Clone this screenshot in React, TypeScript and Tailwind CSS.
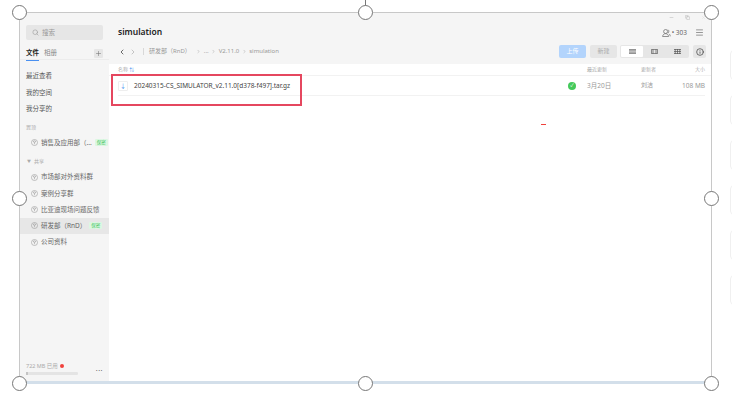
import { Search, Plus, ChevronLeft, ChevronRight, Info, Menu, Minus, Copy, X } from 'lucide-react'

const CJK = "font-['Noto_Sans','Noto_Sans_CJK_SC',sans-serif]"

function Handle({ className }: { className: string }) {
  return <div className={`absolute h-[15px] w-[15px] rounded-full border border-[#777] bg-white ${className}`} />
}

function SpaceIcon() {
  return (
    <svg width="7" height="7" viewBox="0 0 12 12" fill="none" stroke="#9a9a9a" strokeWidth="1" className="shrink-0">
      <circle cx="6" cy="6" r="5.2" />
      <path d="M3.5 4.4 6 3l2.5 1.4L6 5.8zM6 5.8V9" />
    </svg>
  )
}

function Badge() {
  return <span className="shrink-0 whitespace-nowrap rounded-[1px] bg-[#dcf7e2] px-[2px] text-[4.5px] leading-[7px] text-[#3cc45c]">保密</span>
}

function NavItem({ label, badge, active }: { label: string; badge?: boolean; active?: boolean }) {
  return (
    <div className={`flex h-[16.25px] items-center gap-[3px] pl-[11px] text-[6.5px] text-[#666] ${active ? 'bg-[#e7e7e7]' : ''}`}>
      <SpaceIcon />
      <span className="whitespace-nowrap">{label}</span>
      {badge && <Badge />}
    </div>
  )
}

function ViewIcon({ kind }: { kind: 'list' | 'columns' | 'grid' }) {
  return (
    <svg width="7" height="5" viewBox="0 0 7 5" fill="none" stroke="#555" strokeWidth="0.7">
      {kind === 'list' && <path d="M0 .4h7M0 1.8h7M0 3.2h7M0 4.6h7" />}
      {kind === 'columns' && <path d="M.4.4h6.2v4.2H.4zM2 .4v4.2M5 .4v4.2" />}
      {kind === 'grid' && <path d="M0 .5h7M0 2.5h7M0 4.5h7M1.2 0v5M3.5 0v5M5.8 0v5" />}
    </svg>
  )
}

function UserCount() {
  return (
    <svg width="9" height="8" viewBox="0 0 9 8" fill="none" stroke="#666" strokeWidth="0.7">
      <circle cx="3.6" cy="2.5" r="2" />
      <path d="M.6 7.5c.2-1.8 1.3-2.8 3-2.8s2.8 1 3 2.8zM6 .7c1 .4 1.2 2.6 0 3.4M7 4.9c.8.4 1.2 1.2 1.3 2.4" />
    </svg>
  )
}

const handles = [
  'left-[12px] top-[5px]',
  'left-[358px] top-[5px]',
  'left-[704px] top-[5px]',
  'left-[12px] top-[191px]',
  'left-[704px] top-[191px]',
  'left-[12px] top-[376px]',
  'left-[358px] top-[376px]',
  'left-[704px] top-[376px]',
]

export default function App() {
  return (
    <div className={`relative h-[412px] w-[732px] overflow-hidden bg-white ${CJK}`}>
      {/* selected window on the canvas */}
      <div className="absolute left-[19px] top-[12px] flex h-[370px] w-[693px] border-x border-t border-[#c8c8c8]">
        <aside className="flex w-[89px] shrink-0 flex-col overflow-hidden bg-[#f5f5f5]">
          <div className="mx-[6px] mt-[12px] flex h-[15px] items-center gap-[3px] rounded-[2px] bg-[#e6e6e6] pl-[6px] text-[6.5px] text-[#999]">
            <Search size={7} />
            <span>搜索</span>
          </div>
          <div className="mt-[7px] flex h-[13px] items-center border-b border-[#ececec] pl-[6px] pr-[6px] text-[6.5px] text-[#888]">
            <span className="relative font-semibold text-[#222]">
              文件
              <span className="absolute -bottom-[3px] left-0 h-[1px] w-[13px] bg-[#4a90f0]" />
            </span>
            <span className="ml-[5px]">相册</span>
            <span className="ml-auto flex h-[9px] w-[9px] items-center justify-center rounded-[1px] bg-[#e6e6e6]">
              <Plus size={7} color="#777" />
            </span>
          </div>
          <div className="mt-[8px] flex flex-col text-[6.5px] text-[#555]">
            <div className="flex h-[16.25px] items-center pl-[6px]">最近查看</div>
            <div className="flex h-[16.25px] items-center pl-[6px]">我的空间</div>
            <div className="flex h-[16.25px] items-center pl-[6px]">我分享的</div>
          </div>
          <div className="mt-[5px] flex h-[12px] items-center pl-[6px] text-[5px] text-[#aaa]">置顶</div>
          <div className="mt-[1px] flex h-[16.25px] items-center gap-[3px] pl-[11px] text-[6.5px] text-[#666]">
            <SpaceIcon />
            <span className="whitespace-nowrap">销售及应用部（...</span>
            <Badge />
          </div>
          <div className="mt-[5px] flex h-[12px] items-center gap-[3px] pl-[7px] text-[5px] text-[#aaa]">
            <span className="text-[4px]">▼</span>
            <span>共享</span>
          </div>
          <div className="mt-[1px] flex flex-col">
            <NavItem label="市场部对外资料群" />
            <NavItem label="案例分享群" />
            <NavItem label="比亚迪现场问题反馈" />
            <NavItem label="研发部（RnD）" badge active />
            <NavItem label="公司资料" />
          </div>
          <div className="mt-auto flex items-center px-[6px] pb-[7px]">
            <div className="flex-1">
              <div className="flex items-center gap-[2px] text-[5.5px] leading-[8px] text-[#aaa]">
                <span className="whitespace-nowrap">722 MB 已用</span>
                <span className="h-[4px] w-[4px] rounded-full bg-[#f0413c]" />
              </div>
              <div className="mt-[2px] h-[3px] w-[52px] rounded-[1px] bg-[#e4e4e4]">
                <div className="h-full w-[2px] bg-[#c4c4c4]" />
              </div>
            </div>
            <span className="text-[7px] leading-none tracking-[0.5px] text-[#666]">...</span>
          </div>
        </aside>

        <main className="flex min-w-0 flex-1 flex-col">
          <header className="h-[51px] shrink-0 bg-[#f5f5f5] pl-[9px] pr-[5px]">
            <div className="flex h-[4px] items-start justify-end gap-[11px] pr-[0px] pt-[1px] text-[#aaa]">
              <Minus size={5} className="mt-[1px]" />
              <Copy size={5} className="mt-[1px]" />
              <X size={5} className="mt-[1px] text-[#ddd]" />
            </div>
            <div className="flex h-[22px] items-center pt-[9px]">
              <span className="text-[8.5px] font-semibold text-[#222]">simulation</span>
              <div className="ml-auto flex items-center pr-[2px] text-[6.5px] text-[#666]">
                <UserCount />
                <span className="ml-[1px]">• 303</span>
                <Menu size={9} color="#777" className="ml-[8px]" />
              </div>
            </div>
            <div className="mt-[6px] flex h-[13px] items-center text-[6px] text-[#999]">
              <ChevronLeft size={8} color="#222" />
              <ChevronRight size={8} color="#aaa" className="ml-[3px]" />
              <span className="ml-[6px] h-[7px] w-px bg-[#d8d8d8]" />
              <span className="ml-[5px] whitespace-nowrap">研发部（RnD）</span>
              <ChevronRight size={5} className="ml-[5px]" />
              <span className="ml-[3px]">...</span>
              <ChevronRight size={5} className="ml-[2px]" />
              <span className="ml-[3px]">V2.11.0</span>
              <ChevronRight size={5} className="ml-[3px]" />
              <span className="ml-[2px]">simulation</span>
              <div className="ml-auto flex items-center">
                <button className="flex h-[13px] w-[27px] items-center justify-center rounded-[2px] bg-[#b3d4fc] text-[6px] text-white">上传</button>
                <button className="ml-[4px] flex h-[13px] w-[27px] items-center justify-center rounded-[2px] bg-[#e6e6e6] text-[6px] text-[#aaa]">新建</button>
                <div className="ml-[3px] flex h-[13px] w-[69px] items-center rounded-[2px] bg-[#e6e6e6] p-[1px]">
                  <span className="flex h-[11px] w-[22px] items-center justify-center rounded-[1px] bg-white"><ViewIcon kind="list" /></span>
                  <span className="flex h-[11px] w-[23px] items-center justify-center"><ViewIcon kind="columns" /></span>
                  <span className="flex h-[11px] w-[22px] items-center justify-center"><ViewIcon kind="grid" /></span>
                </div>
                <span className="ml-[4px] flex h-[13px] w-[13px] items-center justify-center rounded-[2px] bg-[#e6e6e6]">
                  <Info size={8} color="#333" />
                </span>
              </div>
            </div>
          </header>

          <div className="flex h-[12px] items-center border-b border-[#f2f2f2] pl-[9px] pr-[6px] text-[5px] text-[#aaa]">
            <span className="flex-1">名称 <span className="text-[#4a90f0]">⇅</span></span>
            <span className="w-[54px]">最近更新</span>
            <span className="w-[38px]">更新者</span>
            <span className="w-[26px] text-right">大小</span>
          </div>
          <div className="ml-[9px] mr-[6px] flex h-[20px] items-center border-b border-[#f2f2f2] text-[6.5px]">
            <span className="flex h-[10px] w-[10px] items-center justify-center rounded-[1px] border border-[#eee] text-[6px] leading-none text-[#4a90f0]">↓</span>
            <span className="ml-[6px] flex-1 whitespace-nowrap text-[#444]">20240315-CS_SIMULATOR_v2.11.0[d378-f497].tar.gz</span>
            <span className="mr-[11px] flex h-[8px] w-[8px] items-center justify-center rounded-full bg-[#44c95a] text-[5px] leading-none text-white">✓</span>
            <span className="w-[54px] text-[6.5px] text-[#999]">3月20日</span>
            <span className="w-[38px] text-[6px] text-[#999]">刘洁</span>
            <span className="w-[26px] whitespace-nowrap text-right text-[6.5px] text-[#999]">108 MB</span>
          </div>
        </main>
      </div>

      {/* bottom edge of the selection */}
      <div className="absolute left-[19px] top-[381px] h-[3px] w-[693px] bg-[#d3dfea]" />

      {/* red callout around the file row */}
      <div className="absolute left-[111px] top-[74px] h-[32px] w-[191px] border-[2px] border-[#e5475f]" />
      <div className="absolute left-[541px] top-[124px] h-[1px] w-[5px] bg-[#f0413c]" />

      {/* rotate stem */}
      <div className="absolute left-[365px] top-0 h-[6px] w-px bg-[#777]" />
      {handles.map((h) => (
        <Handle key={h} className={h} />
      ))}

      {/* cards cut off at the right */}
      <div className="absolute left-[730px] top-[50px] flex flex-col gap-[15px]">
        {[0, 1, 2, 3, 4, 5].map((i) => (
          <div key={i} className="h-[30px] w-[20px] rounded-[4px] border border-[#f0f0f0] bg-white" />
        ))}
      </div>
    </div>
  )
}
